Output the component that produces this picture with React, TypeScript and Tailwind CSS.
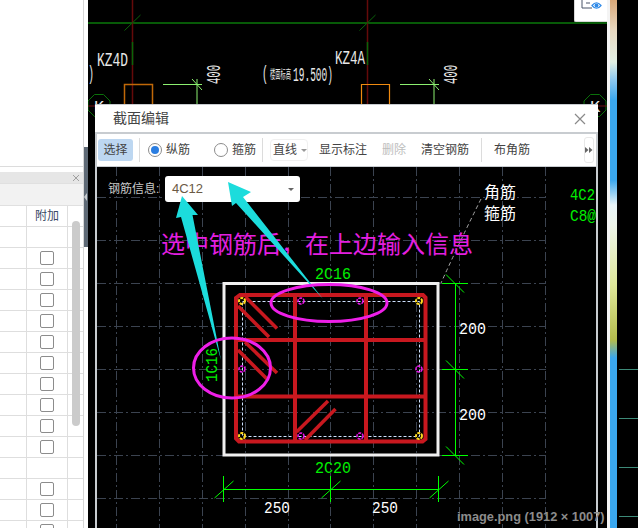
const mono = "font-['Liberation_Mono',monospace]";

const gridX = [116.5, 159.5, 202.5, 245.5, 288.5, 330.5, 373.5, 416.5, 459.5, 502.5, 545.5];
const gridY = [196.5, 239.5, 282.5, 325.5, 368.5, 411.5, 454.5, 497.5];

// rows of the side table, true = row has a checkbox
const rows = [false, false, true, true, true, true, true, true, true, true, true, true, false, true, true, true];

const hoopDiagonals = [
  [245.5, 296, 277, 327.5],
  [238, 305, 269, 336],
  [245, 341, 277, 372],
  [238, 349, 268, 379],
  [296.5, 431, 328, 400],
  [305, 439, 335.5, 408],
];

function SideTable() {
  return (
    <div className="relative flex w-[84px] shrink-0 flex-col border-r border-[#d6d6d6] bg-white">
      <div className="h-[167px] shrink-0 border-b border-[#dcdcdc]" />
      <div className="h-[5px] shrink-0" />
      <div className="flex h-[11px] shrink-0 items-center justify-end bg-[#e6e6e6] pr-[3px]">
        <svg width="8" height="8" viewBox="0 0 8 8" className="stroke-[#a0a0a0]">
          <path d="M1 1l6 6M7 1l-6 6" strokeWidth="1" />
        </svg>
      </div>
      <div className="h-[23px] shrink-0 border-y border-[#e0e0e0] bg-[#f2f2f2]" />
      {rows.map((hasBox, i) => (
        <div key={i} className="grid h-[21px] shrink-0 grid-cols-[27px_41px_1fr] border-b border-[#dedede]">
          <div className="border-r border-[#dedede]" />
          <div className="flex items-center justify-center border-r border-[#dedede]">
            {i === 0 && <span className="text-[12px] text-[#3b4a66]">附加</span>}
            {hasBox && <div className="h-[14px] w-[14px] rounded-[2px] border border-[#8c8c8c] bg-white" />}
          </div>
          <div />
        </div>
      ))}
      <div className="absolute left-[72px] top-[221px] h-[205px] w-[8px] rounded-[4px] bg-[#cbcbcb]" />
      <div className="absolute left-[84px] top-[147px] flex h-[100px] w-[4px] items-center bg-[#5f6a76]">
        <div className="h-0 w-0 border-y-[4px] border-r-[3px] border-y-transparent border-r-[#c8ccd0]" />
      </div>
    </div>
  );
}

function TopDrawing() {
  return (
    <svg viewBox="88 0 519 528" className="absolute inset-0 h-[528px] w-[519px]">
      <line x1="88" y1="23" x2="607" y2="23" stroke="#075a07" strokeWidth="2" />
      {[132.5, 367.5].map((x) => (
        <g key={x}>
          <line x1={x} y1="0" x2={x} y2="105" stroke="#640a0a" strokeWidth="1.5" />
          <line x1={x} y1="42" x2={x} y2="65" stroke="#0a640a" strokeWidth="1.5" />
          <line x1={x - 8} y1="30.5" x2={x + 8} y2="15" stroke="#0a640a" />
        </g>
      ))}
      <text x="97" y="66" fontSize="21" fill="#e8e8e8" textLength="31" lengthAdjust="spacingAndGlyphs" className={mono}>KZ4D</text>
      <text x="335" y="64" fontSize="21" fill="#e8e8e8" textLength="30" lengthAdjust="spacingAndGlyphs" className={mono}>KZ4A</text>
      <text x="88" y="80" fontSize="20" fill="#e8e8e8" textLength="6" lengthAdjust="spacingAndGlyphs" className={mono}>)</text>
      <text x="262" y="80" fontSize="20" fill="#e8e8e8" textLength="6" lengthAdjust="spacingAndGlyphs" className={mono}>(</text>
      <text x="270" y="79" fontSize="12" fill="#e8e8e8" textLength="21" lengthAdjust="spacingAndGlyphs">楼面标高</text>
      <text x="293" y="81" fontSize="21" fill="#e8e8e8" textLength="40" lengthAdjust="spacingAndGlyphs" className={mono}>19.500)</text>
      {[219.5, 456.5].map((x) => (
        <text key={x} x={x} y="84" fontSize="21" fill="#e8e8e8" textLength="19" lengthAdjust="spacingAndGlyphs" transform={`rotate(-90 ${x} 84)`} className={mono}>400</text>
      ))}
      <path d="M124.5 105V84.5H152.5V105" fill="none" stroke="#c06808" strokeWidth="1.5" />
      <path d="M361.5 105V84.5H389.5V105" fill="none" stroke="#f08a10" strokeWidth="1.2" />
      {[197, 434].map((x) => (
        <g key={x} stroke="#8cf070">
          <line x1={x - 34} y1="84.5" x2={x + 5} y2="84.5" />
          <line x1={x} y1="79" x2={x} y2="105" />
          <line x1={x - 5} y1="79" x2={x + 5} y2="90" />
        </g>
      ))}
      {[99, 595].map((x) => (
        <g key={x}>
          <polygon
            points={`${x - 4.5},94.5 ${x + 4.5},94.5 ${x + 11},101 ${x + 11},110 ${x + 4.5},116.5 ${x - 4.5},116.5 ${x - 11},110 ${x - 11},101`}
            fill="none"
            stroke="#0a700a"
          />
          <line x1={x - 11} y1="106" x2={x + 12} y2="106" stroke="#701010" />
          <text x={x - 5} y="112" fontSize="17" fill="#e8e8e8" className={mono}>K</text>
        </g>
      ))}
    </svg>
  );
}

function SectionDrawing() {
  return (
    <svg viewBox="97 166 499 362" className="absolute inset-0 h-[362px] w-[499px]">
      <g stroke="#3b4350" strokeDasharray="9 3 2 3">
        {gridX.map((x) => (
          <line key={x} x1={x} y1="166" x2={x} y2="528" />
        ))}
        {gridY.map((y) => (
          <line key={y} x1="97" y1={y} x2="546" y2={y} />
        ))}
      </g>

      <rect x="224" y="282.5" width="214" height="171.5" fill="none" stroke="#f0f0f0" strokeWidth="3" />

      <rect x="242.5" y="300.5" width="177" height="135" fill="none" stroke="#cfe2ff" strokeDasharray="3 2" />

      <g stroke="#c8181f" fill="none">
        <polygon points="240,294 423,294 425.5,296.5 425.5,438 422.5,440.5 239,440.5 236,437.5 236,297" strokeWidth="4" />
        <line x1="295" y1="294" x2="295" y2="440" strokeWidth="4" />
        <line x1="366" y1="294" x2="366" y2="440" strokeWidth="4" />
        <line x1="236" y1="339" x2="425" y2="339" strokeWidth="4" />
        <line x1="236" y1="395.5" x2="425" y2="395.5" strokeWidth="4" />
        {hoopDiagonals.map(([x1, y1, x2, y2], i) => (
          <line key={i} x1={x1} y1={y1} x2={x2} y2={y2} strokeWidth="3.5" />
        ))}
      </g>

      {[[242, 300], [419, 300], [242, 435], [419, 435]].map(([cx, cy]) => (
        <circle key={`${cx}-${cy}`} cx={cx} cy={cy} r="3" fill="none" stroke="#ffd81e" strokeWidth="2" strokeDasharray="3 1" />
      ))}
      {[[301, 300], [360, 300], [242, 368], [419, 368], [301, 435], [360, 435]].map(([cx, cy]) => (
        <circle key={`${cx}-${cy}`} cx={cx} cy={cy} r="3" fill="none" stroke="#f014f0" strokeWidth="1.5" strokeDasharray="3 1" />
      ))}

      <g stroke="#00ff00">
        <line x1="455.5" y1="282" x2="455.5" y2="454" />
        {[282.5, 368.5, 454.5].map((y) => (
          <g key={y}>
            <line x1="442" y1={y} x2="468" y2={y} />
            <line x1="446" y1={y - 9} x2="464" y2={y + 9} />
          </g>
        ))}
        <line x1="223" y1="488.5" x2="438.5" y2="488.5" />
        {[223.5, 330.5, 438.5].map((x) => (
          <g key={x}>
            <line x1={x} y1="475" x2={x} y2="501" />
            <line x1={x - 9} y1="497" x2={x + 10} y2="480" />
          </g>
        ))}
      </g>

      <g fill="#00f000" fontSize="17" className={mono}>
        <text x="315" y="278" textLength="36" lengthAdjust="spacingAndGlyphs">2C16</text>
        <text x="315" y="471.5" textLength="36" lengthAdjust="spacingAndGlyphs">2C20</text>
        <text x="217" y="381" textLength="34" lengthAdjust="spacingAndGlyphs" transform="rotate(-90 217 381)">1C16</text>
        <text x="570" y="199" textLength="25" lengthAdjust="spacingAndGlyphs">4C2</text>
        <text x="570" y="219.5" textLength="26" lengthAdjust="spacingAndGlyphs">C8@</text>
      </g>
      <g fill="#ffffff" fontSize="17" className={mono}>
        <text x="459" y="332.5" textLength="27" lengthAdjust="spacingAndGlyphs">200</text>
        <text x="459" y="418.5" textLength="27" lengthAdjust="spacingAndGlyphs">200</text>
        <text x="264" y="512" textLength="26" lengthAdjust="spacingAndGlyphs">250</text>
        <text x="372" y="512" textLength="26" lengthAdjust="spacingAndGlyphs">250</text>
      </g>
      <g fill="#ffffff" fontSize="16">
        <text x="484" y="197">角筋</text>
        <text x="484" y="218">箍筋</text>
      </g>
      <path d="M481 198Q460 240 441 282" fill="none" stroke="#a8a8a8" strokeDasharray="4 3" />
    </svg>
  );
}

function Dialog() {
  return (
    <div className="absolute left-[7px] top-[104px] flex h-[424px] w-[503px] flex-col bg-[#c8ccd0] px-[2px] pt-px text-[12px] text-[#444]">
      <div className="-mx-[2px] flex h-[27px] shrink-0 items-center justify-between bg-white pl-[18px] pr-[12px]">
        <span className="text-[14px] text-[#444]">截面编辑</span>
        <svg width="12" height="12" viewBox="0 0 12 12" className="stroke-[#8a8a8a]">
          <path d="M1 1l10 10M11 1L1 11" strokeWidth="1.2" />
        </svg>
      </div>
      <div className="mt-[2px] flex h-[32px] shrink-0 items-center bg-white">
        <div className="ml-px flex h-[22px] w-[35px] items-center justify-center rounded-[3px] bg-[#bdd7f1]">选择</div>
        <div className="ml-[6px] h-[24px] w-px bg-[#dcdcdc]" />
        <div className="ml-[8px] flex h-[14px] w-[14px] items-center justify-center rounded-full border border-[#8c8c8c]">
          <div className="h-[8px] w-[8px] rounded-full bg-[#2a7de1]" />
        </div>
        <span className="ml-[4px]">纵筋</span>
        <div className="ml-[24px] h-[14px] w-[14px] rounded-full border border-[#8c8c8c]" />
        <span className="ml-[4px]">箍筋</span>
        <div className="ml-[6px] h-[24px] w-px bg-[#dcdcdc]" />
        <div className="ml-[7px] flex h-[22px] w-[38px] items-center rounded-[4px] border border-[#f0f0f0] pl-[2px]">
          <span>直线</span>
          <div className="ml-[4px] h-0 w-0 border-x-[3px] border-t-[3px] border-x-transparent border-t-[#999]" />
        </div>
        <span className="ml-[11px]">显示标注</span>
        <span className="ml-[15px] text-[#bdbdbd]">删除</span>
        <span className="ml-[15px]">清空钢筋</span>
        <div className="ml-[12px] h-[24px] w-px bg-[#dcdcdc]" />
        <span className="ml-[12px]">布角筋</span>
        <div className="ml-auto mr-[2px] flex h-[26px] w-[10px] items-center justify-center rounded-[3px] border border-[#e8e8e8]">
          <svg width="8" height="6" viewBox="0 0 8 6" className="fill-[#666]">
            <path d="M0 0l3.5 3L0 6zM4 0l3.5 3L4 6z" />
          </svg>
        </div>
      </div>
      <div className="relative mt-px flex-1 overflow-hidden bg-black">
        <SectionDrawing />
        <div className="absolute left-[11px] top-[9px] flex items-center">
          <span className="w-[57px] text-[#c8c8c8]">钢筋信息:</span>
          <div className="flex h-[26px] w-[135px] items-center justify-between rounded-[3px] bg-white pl-[7px] pr-[6px]">
            <span className="text-[13px] text-[#6b5a45]">4C12</span>
            <div className="h-0 w-0 border-x-[3px] border-t-[3px] border-x-transparent border-t-[#666]" />
          </div>
        </div>
      </div>
    </div>
  );
}

function Annotations() {
  return (
    <>
      <div className="absolute left-[161px] top-[227px] text-[24px] leading-[36px] text-[#e41fe0]">选中钢筋后，在上边输入信息</div>
      <svg viewBox="0 0 638 528" className="pointer-events-none absolute inset-0 h-[528px] w-[638px]">
        <polygon points="182,196 198,215 192.5,215 221,360 181,217 176,218" fill="#1cdcdc" />
        <polygon points="228,182 251,192 243,197 323,299 236,203 232,206" fill="#1cdcdc" />
        <ellipse cx="329" cy="303" rx="58" ry="18.5" fill="none" stroke="#ee1fe8" strokeWidth="3" />
        <ellipse cx="232" cy="368" rx="38.5" ry="30" fill="none" stroke="#ee1fe8" strokeWidth="3" />
      </svg>
      <div className="absolute left-[457px] top-[507px] text-[12.8px] font-bold text-[#8c8c8c]">image.png (1912 × 1007)</div>
    </>
  );
}

export default function App() {
  return (
    <div className="relative flex h-[528px] w-[638px] overflow-hidden bg-black font-['Liberation_Sans','Noto_Sans_CJK_SC',sans-serif]">
      <SideTable />
      <div className="w-[4px] shrink-0 bg-white" />
      <div className="relative w-[519px] shrink-0">
        <TopDrawing />
        <div className="absolute right-0 top-0 h-[22px] w-[33px] rounded-bl-[2px] border-b border-l border-[#d8d8d8] bg-white">
          <svg width="33" height="22" viewBox="0 0 33 22" fill="none">
            <path d="M7 0V8H17M11 3H15" stroke="#4a5568" strokeWidth="1" />
            <path d="M17 5.5Q21.5 0 26 5.5Q21.5 11 17 5.5Z" stroke="#2f8ae8" strokeWidth="1.2" />
            <circle cx="21.5" cy="5.5" r="2" fill="#2f8ae8" />
          </svg>
        </div>
        <Dialog />
      </div>
      <div className="flex w-[10px] shrink-0 border-l-[3px] border-[#f4f4f4]">
        <div className="w-full bg-[linear-gradient(180deg,#d9a878_0px,#e8d8c0_30px,#e2f0e4_62px,#8cc8f0_80px,#3aa8f0_100px,#3aa8f0_180px,#e8f4f8_205px,#eef5ea_225px,#dfe89a_285px,#b4bc4c_340px,#3aa8f0_358px,#3aa8f0_528px)]" />
      </div>
      <div className="flex flex-1 flex-col pl-[2px] pt-[369px]">
        {[0, 1, 2, 3].map((i) => (
          <div key={i} className="mb-[48px] h-px shrink-0 bg-[#3d8a78]" />
        ))}
      </div>
      <Annotations />
    </div>
  );
}
